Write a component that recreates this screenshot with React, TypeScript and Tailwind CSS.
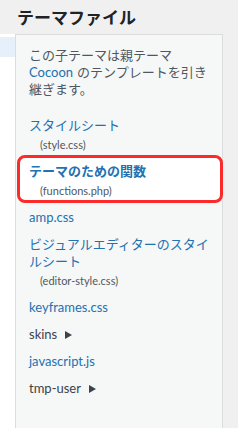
import React from 'react';

const font = { fontFamily: 'Lato, "Noto Sans CJK JP", sans-serif' };

function Sub({ children }: { children: React.ReactNode }) {
  return <div className="pl-[11px] mt-[2px] text-[11px] leading-[17px] text-[#50575e]">{children}</div>;
}

function Folder({ name }: { name: string }) {
  return (
    <div className="flex items-center gap-[8px] text-[13px] leading-[17px] text-[#3c434a]">
      <span>{name}</span>
      <span className="w-0 h-0 border-y-[4px] border-y-transparent border-l-[7px] border-l-[#3c434a]" />
    </div>
  );
}

export default function App() {
  return (
    <div className="w-[238px] h-[428px] bg-[#f0f0f1] flex flex-col overflow-hidden" style={font}>
      {/* header */}
      <div className="h-[34px] shrink-0 pl-[17px] pt-[6px]">
        <h2 className="text-[17px] leading-[24px] font-bold text-[#1d2327]">テーマファイル</h2>
      </div>

      <div className="flex flex-1">
        {/* edge of the editor */}
        <div className="w-[15px] bg-white pt-[3px]">
          <div className="h-[20px] bg-[#e6f0fb]" />
        </div>

        {/* file list */}
        <div className="w-[208px] bg-[#f6f7f7] border border-b-0 border-[#dcdcde] pl-[13px] pr-[8px] pt-[12px]">
          <div className="text-[13px] leading-[17px] text-[#50575e]">
            <div>この子テーマは親テーマ</div>
            <div className="flex gap-[4px]">
              <span className="text-[#2271b1]">Cocoon</span>
              <span>のテンプレートを引き</span>
            </div>
            <div>継ぎます。</div>
          </div>

          <div className="mt-[19px] flex flex-col gap-[10px]">
            <div>
              <div className="text-[13px] leading-[17px] text-[#2271b1]">スタイルシート</div>
              <Sub>(style.css)</Sub>
            </div>

            <div className="relative">
              <div className="absolute -left-[12px] -right-[9px] -top-[8px] -bottom-[4px] bg-white border-[3px] border-[#fb2b2b] rounded-[8px]" />
              <div className="relative">
                <div className="text-[13px] leading-[17px] font-bold text-[#2271b1]">テーマのための関数</div>
                <Sub>(functions.php)</Sub>
              </div>
            </div>

            <div className="text-[13px] leading-[17px] text-[#2271b1]">amp.css</div>

            <div>
              <div className="text-[13px] leading-[17px] text-[#2271b1]">ビジュアルエディターのスタイルシート</div>
              <Sub>(editor-style.css)</Sub>
            </div>

            <div className="text-[13px] leading-[17px] text-[#2271b1]">keyframes.css</div>
            <Folder name="skins" />
            <div className="text-[13px] leading-[17px] text-[#2271b1]">javascript.js</div>
            <Folder name="tmp-user" />
          </div>
        </div>
      </div>
    </div>
  );
}
